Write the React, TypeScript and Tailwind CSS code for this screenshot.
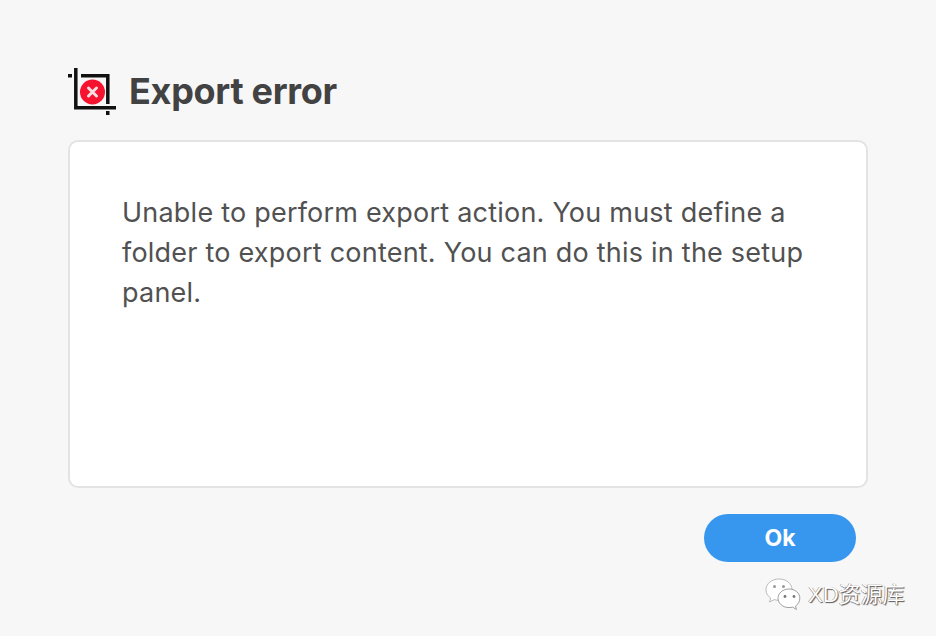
import React from "react";

function ExportErrorIcon() {
  return (
    <svg width="50" height="50" viewBox="0 0 50 50" className="shrink-0" aria-hidden>
      <rect x="0" y="6" width="4" height="3.500" fill="#111" />
      <rect x="38" y="43" width="3.500" height="4" fill="#111" />
      <path d="M7.800 0V39.800H48" fill="none" stroke="#111" strokeWidth="3.500" />
      <path d="M13 7.800H39.800V36" fill="none" stroke="#111" strokeWidth="3.500" />
      <circle cx="24.500" cy="24" r="12.500" fill="#f5132f" />
      <path d="M20.500 20L28.500 28M28.500 20L20.500 28" stroke="#fbdfe3" strokeWidth="3" strokeLinecap="round" />
    </svg>
  );
}

function WechatMark() {
  return (
    <svg width="38" height="34" viewBox="0 0 38 34" aria-hidden>
      <path d="M14 1C6.500 1 1 5.800 1 11.800c0 3.400 1.800 6.300 4.700 8.300L4.600 24l4.600-2.400c1.500.4 3 .7 4.800.7 6.500 0 13-4.600 13-10.500C27 5.800 21.500 1 14 1Z" fill="#fff" stroke="#aaa" strokeWidth="0.800" />
      <path d="M24 11c-6 0-11 4.100-11 9.300 0 5.200 5 9.300 11 9.300 1.300 0 2.500-.2 3.700-.5l3.700 2.400-.9-3.400c2.600-1.800 4.300-4.600 4.300-7.800C35 15.100 30 11 24 11Z" fill="#fff" stroke="#888" strokeWidth="0.800" />
      <circle cx="9.500" cy="8.500" r="1.500" fill="#999" />
      <circle cx="18.500" cy="8.500" r="1.500" fill="#999" />
      <circle cx="20" cy="18.500" r="1.400" fill="#777" />
      <circle cx="29" cy="18.500" r="1.400" fill="#777" />
    </svg>
  );
}

export default function App() {
  return (
    <div className="relative flex h-[636px] w-[936px] flex-col overflow-hidden bg-[#f7f7f7] px-[68px] pt-[68px]">
      <header className="flex h-[50px] items-center gap-[11px]">
        <ExportErrorIcon />
        <h1 className="-translate-y-[2px] font-['Inter',sans-serif] text-[36px] leading-none font-bold tracking-[-0.3px] text-[#424242]">
          Export error
        </h1>
      </header>

      <div className="mt-[22px] h-[348px] w-[800px] rounded-[10px] border-2 border-[#e3e3e3] bg-white px-[52px] pt-[51px]">
        <p className="font-['Inter',sans-serif] text-[27px] leading-[40px] tracking-[0.22px] text-[#515151]">
          Unable to perform export action. You must define a folder to export content. You can do this in the setup panel.
        </p>
      </div>

      <div className="mt-[26px] flex justify-end pr-[12px]">
        <button
          type="button"
          className="h-[48px] w-[152px] rounded-full bg-[#3797ee] font-['Inter',sans-serif] text-[23px] font-bold text-white"
        >
          Ok
        </button>
      </div>

      <div className="absolute top-[578px] left-[765px] flex items-center gap-[5px]">
        <WechatMark />
        <span className="font-['Liberation_Sans','Noto_Sans_CJK_SC',sans-serif] text-[22px] leading-none text-white [text-shadow:1px_1px_1px_#555,-0.5px_-0.5px_0.5px_#777]">
          XD资源库
        </span>
      </div>
    </div>
  );
}
